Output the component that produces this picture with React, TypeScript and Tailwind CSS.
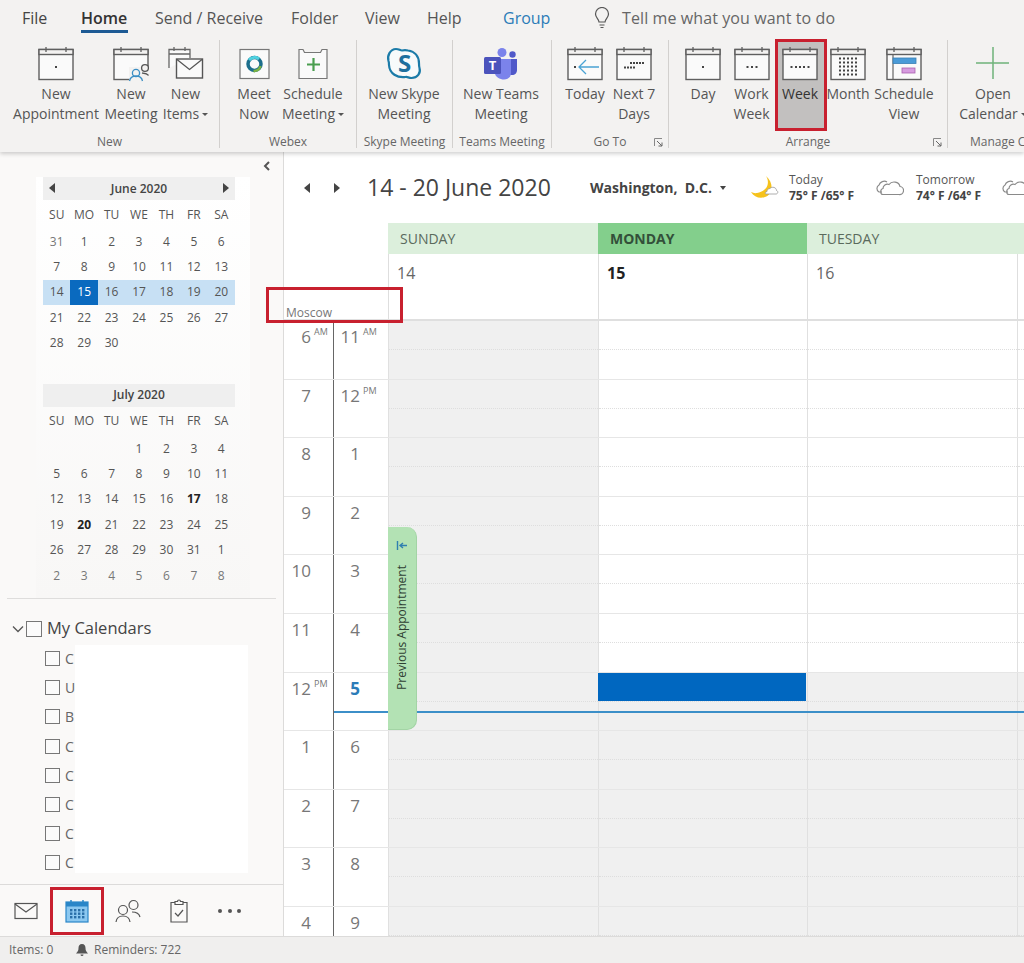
import React from "react";

const Cal = ({ children }: { children?: React.ReactNode }) => (
  <svg width="36" height="36" viewBox="0 0 36 36" fill="none">
    <rect x="1" y="3.5" width="34" height="30" fill="#fafafa" stroke="#5f5f5f" strokeWidth="1.4" />
    <rect x="1" y="3.5" width="34" height="5" fill="#f3f2f1" stroke="#5f5f5f" strokeWidth="1.4" />
    <path d="M8 1v5M28 1v5" stroke="#5f5f5f" strokeWidth="1.3" />
    {children}
  </svg>
);
const Dots = ({ pts }: { pts: [number, number][] }) => (
  <>
    {pts.map(([x, y], i) => (
      <rect key={i} x={x} y={y} width="2" height="2" fill="#444" />
    ))}
  </>
);
const grid = (cols: number[], rows: number[]): [number, number][] =>
  rows.flatMap((y) => cols.map((x) => [x, y] as [number, number]));

const Icons: Record<string, React.ReactNode> = {
  appt: <Cal><Dots pts={[[17, 20]]} /></Cal>,
  meeting: (
    <Cal>
      <rect x="16" y="21" width="20" height="15" fill="#f3f2f1" />
      <circle cx="23" cy="27" r="3.6" stroke="#3b8ec4" strokeWidth="1.3" fill="#f3f2f1" />
      <path d="M16.5 35c.8-4 3-5 6.5-5s5.7 1 6.5 5" stroke="#3b8ec4" strokeWidth="1.3" />
      <circle cx="32" cy="22" r="3.4" stroke="#555" strokeWidth="1.3" fill="#f3f2f1" />
      <path d="M29 27c2 .2 5 .2 6.5 2.5" stroke="#555" strokeWidth="1.3" />
    </Cal>
  ),
  items: (
    <svg width="36" height="36" viewBox="0 0 36 36" fill="none">
      <path d="M1 22V3.5h21V12" stroke="#666" strokeWidth="1.3" fill="#fafafa" />
      <path d="M1 8h21M6 1v4M17 1v4" stroke="#666" strokeWidth="1.3" />
      <rect x="8.500" y="13" width="26" height="19" fill="#fafafa" stroke="#555" strokeWidth="1.4" />
      <path d="M9 13.500l12.500 10 12.500-10" stroke="#555" strokeWidth="1.3" />
    </svg>
  ),
  meet: (
    <svg width="36" height="36" viewBox="0 0 36 36" fill="none">
      <rect x="4" y="3.500" width="29" height="29" fill="#fafafa" stroke="#777" strokeWidth="1.2" />
      <circle cx="18.500" cy="18" r="6.500" stroke="#1c6e8c" strokeWidth="3.500" />
      <path d="M13 14a7 7 0 0 1 10-1" stroke="#4fd1e0" strokeWidth="3" />
      <path d="M24.500 20a7 7 0 0 1-7 5" stroke="#7cb342" strokeWidth="2.500" />
    </svg>
  ),
  sched: (
    <svg width="36" height="36" viewBox="0 0 36 36" fill="none">
      <path d="M4 3.500h4l1.500 3h16l1.500-3h5v29H4z" fill="#fafafa" stroke="#777" strokeWidth="1.2" />
      <path d="M18.500 12v13M12 18.500h13" stroke="#4a9e4f" strokeWidth="2.200" />
    </svg>
  ),
  skype: (
    <svg width="36" height="36" viewBox="0 0 36 36" fill="none">
      <path d="M10 3c3 0 4 1.500 6 1.500C18 4 20 4 22 4.500c7 1 11 6 11 13 0 2 0 3 .5 4.500 1.500 5-2 10-8 10-3 0-4-1.500-6-1-8 1-16-3-16.500-12 0-2 0-3-.5-4C1 10 4 3 10 3z" stroke="#1b7ba8" strokeWidth="2.200" fill="#f7fafb" />
      <text x="18.500" y="26" textAnchor="middle" fontSize="24" fontWeight="700" fill="#1d6f9e" fontFamily="'Open Sans',sans-serif">S</text>
    </svg>
  ),
  teams: (
    <svg width="36" height="36" viewBox="0 0 36 36" fill="none">
      <circle cx="19" cy="6.500" r="4.500" fill="#7b83eb" />
      <circle cx="29.500" cy="8.500" r="3.200" fill="#5059c9" />
      <path d="M24 13h10v11c0 3-2 5-5 5s-5-2-5-5z" fill="#5059c9" />
      <path d="M12 13h16v14c0 4-3 6.500-7 6.500s-9-2.500-9-6.500z" fill="#7b83eb" />
      <rect x="1" y="11" width="17" height="17" rx="1.500" fill="#4b53bc" />
      <text x="9.500" y="24" textAnchor="middle" fontSize="13" fontWeight="700" fill="#fff" fontFamily="'Open Sans',sans-serif">T</text>
    </svg>
  ),
  today: (
    <Cal>
      <Dots pts={[[7, 20]]} />
      <path d="M32 21H12M19 14l-7 7 7 7" stroke="#4aa3d4" strokeWidth="1.3" />
    </Cal>
  ),
  next7: <Cal><Dots pts={[...grid([8, 11, 14, 17], [20.500]), ...grid([14, 17, 20, 23, 26], [16])]} /></Cal>,
  day: <Cal><Dots pts={[[17, 20]]} /></Cal>,
  work: <Cal><Dots pts={grid([12.500, 17, 21.500], [20])} /></Cal>,
  week: <Cal><Dots pts={grid([8.500, 13, 17, 21, 25.500], [20])} /></Cal>,
  month: <Cal><Dots pts={grid([9, 13, 17, 21, 25], [11.500, 15.500, 19.500, 23.500, 27.500])} /></Cal>,
  schedv: (
    <Cal>
      <path d="M7 9v24" stroke="#666" strokeWidth="1.2" />
      <rect x="7" y="12" width="23" height="5.500" fill="#4a9bd8" stroke="#3a7fb5" strokeWidth=".8" />
      <rect x="16" y="22" width="13" height="5" fill="#d79ce0" stroke="#a860b0" strokeWidth=".8" />
    </Cal>
  ),
  open: (
    <svg width="36" height="36" viewBox="0 0 36 36" fill="none">
      <path d="M18 1v32M1 17h33" stroke="#6fb37a" strokeWidth="1.500" />
    </svg>
  ),
};

type Btn = { k: string; w: string; a: string; b?: string; caret?: boolean; on?: boolean };
type Grp = { w: string; pl: string; label: string; launcher?: boolean; lc?: string; btns: Btn[] };

const groups: Grp[] = [
  { w: "w-[220px]", pl: "pl-[12px]", label: "New", btns: [
    { k: "appt", w: "w-[88px]", a: "New", b: "Appointment" },
    { k: "meeting", w: "w-[62px]", a: "New", b: "Meeting" },
    { k: "items", w: "w-[47px]", a: "New", b: "Items", caret: true },
  ] },
  { w: "w-[137px]", pl: "pl-[14px]", label: "Webex", btns: [
    { k: "meet", w: "w-[40px]", a: "Meet", b: "Now" },
    { k: "sched", w: "w-[78px]", a: "Schedule", b: "Meeting", caret: true },
  ] },
  { w: "w-[96px]", pl: "pl-0", label: "Skype Meeting", btns: [{ k: "skype", w: "w-[94px]", a: "New Skype", b: "Meeting" }] },
  { w: "w-[99px]", pl: "pl-0", label: "Teams Meeting", btns: [{ k: "teams", w: "w-[96px]", a: "New Teams", b: "Meeting" }] },
  { w: "w-[117px]", pl: "pl-[10px]", label: "Go To", launcher: true, btns: [
    { k: "today", w: "w-[46px]", a: "Today" },
    { k: "next7", w: "w-[52px]", a: "Next 7", b: "Days" },
  ] },
  { w: "w-[279px]", pl: "pl-[10px]", label: "Arrange", launcher: true, btns: [
    { k: "day", w: "w-[48px]", a: "Day" },
    { k: "work", w: "w-[49px]", a: "Work", b: "Week" },
    { k: "week", w: "w-[48px]", a: "Week", on: true },
    { k: "month", w: "w-[48px]", a: "Month" },
    { k: "schedv", w: "w-[64px]", a: "Schedule", b: "View" },
  ] },
  { w: "w-[90px]", pl: "pl-0", label: "Manage Calendars", lc: "text-left pl-[22px]", btns: [{ k: "open", w: "w-[90px]", a: "Open", b: "Calendar", caret: true }] },
];

const Caret = () => <span className="inline-block ml-[3px] mb-[3px] border-x-[3px] border-x-transparent border-t-[3px] border-t-[#555]" />;

function Ribbon() {
  const tabs = [
    ["File", "ml-[22px] w-[59px]", "text-[#444]"],
    ["Home", "w-[74px]", "text-[#333] font-semibold"],
    ["Send / Receive", "w-[136px]", "text-[#555]"],
    ["Folder", "w-[74px]", "text-[#555]"],
    ["View", "w-[62px]", "text-[#555]"],
    ["Help", "w-[76px]", "text-[#555]"],
    ["Group", "w-[98px]", "text-[#2b7cb8]"],
  ];
  return (
    <div className="h-[152px] shrink-0 bg-[#f3f2f1] shadow-[0_2px_4px_rgba(0,0,0,0.18)] z-10 overflow-hidden">
      <div className="h-[40px] flex items-center pb-[4px]">
        {tabs.map(([t, c, col]) => (
          <div key={t} className={`${c} ${col} text-[16px] whitespace-nowrap relative`}>
            {t}
            {t === "Home" && <div className="absolute left-0 top-[24px] w-[47px] h-[3px] bg-[#1d5a94]" />}
          </div>
        ))}
        <svg width="16" height="22" viewBox="0 0 16 22" fill="none" className="-ml-[7px] mr-[12px]">
          <path d="M5 15c0-3-3.500-4-3.500-8a6.500 6.500 0 0 1 13 0c0 4-3.500 5-3.500 8zM5.500 18h5M6.500 20.500h3" stroke="#555" strokeWidth="1.200" />
        </svg>
        <div className="text-[16px] tracking-[0.1px] text-[#666] whitespace-nowrap">Tell me what you want to do</div>
      </div>
      <div className="flex h-[110px] w-[1100px]">
        {groups.map((g, i) => (
          <div key={g.label} className={`${g.w} shrink-0 h-[108px] flex flex-col relative ${i < groups.length - 1 ? "border-r border-[#d2d0ce]" : ""}`}>
            <div className={`flex ${g.pl} h-[92px] shrink-0`}>
              {g.btns.map((b) => (
                <div key={b.k} className={`${b.w} shrink-0 h-[88px] flex flex-col items-center pt-[6px] text-[14px] leading-[19.5px] whitespace-nowrap ${b.on ? "bg-[#c2c0bf] text-[#333]" : "text-[#555]"}`}>
                  <div className="h-[36px] mb-[2px]">{Icons[b.k]}</div>
                  <div>{b.a}</div>
                  {b.b && <div>{b.b}{b.caret && <Caret />}</div>}
                </div>
              ))}
            </div>
            <div className={`h-[16px] text-center text-[12px] leading-[20px] text-[#666] whitespace-nowrap ${g.lc ?? ""}`}>{g.label}</div>
            {g.launcher && (
              <svg width="9" height="9" viewBox="0 0 9 9" fill="none" className="absolute right-[5px] bottom-[1px]">
                <path d="M.5 8V.5H8" stroke="#888" />
                <path d="M3 3l5 5M8 4.500V8H4.500" stroke="#666" />
              </svg>
            )}
          </div>
        ))}
      </div>
    </div>
  );
}

const Tri = ({ dir, c = "#444" }: { dir: "l" | "r"; c?: string }) => (
  <span className={`inline-block border-y-[5px] border-y-transparent ${dir === "l" ? "border-r-[6px]" : "border-l-[6px]"}`} style={dir === "l" ? { borderRightColor: c } : { borderLeftColor: c }} />
);

function MiniCal({ title, nav, weeks, bold = [], sel }: { title: string; nav?: boolean; weeks: (string | number)[][]; bold?: number[]; sel?: number }) {
  return (
    <div className="text-[12px] text-[#555]">
      <div className="h-[23px] bg-[#efefef] flex items-center justify-between px-[6px] font-semibold text-[12px] text-[#444]">
        <span className="w-[8px]">{nav && <Tri dir="l" />}</span>
        <span>{title}</span>
        <span className="w-[8px] text-right">{nav && <Tri dir="r" />}</span>
      </div>
      <div className="grid grid-cols-7 h-[29px] items-center text-center text-[#555]">
        {["SU", "MO", "TU", "WE", "TH", "FR", "SA"].map((d) => <div key={d}>{d}</div>)}
      </div>
      {weeks.map((w, i) => (
        <div key={i} className={`grid grid-cols-7 h-[25.4px] items-center text-center ${w[0] === 14 && sel ? "bg-[#c7e0f4]" : ""}`}>
          {w.map((d, j) => {
            const isSel = sel === d && w[0] === 14;
            const isBold = typeof d === "number" && bold.includes(d) && i > 0 && i < 5;
            const isMuted = (i === 0 && typeof d === "number" && d > 20) || i === 5;
            return (
              <div key={j} className={`h-full flex items-center justify-center ${isSel ? "bg-[#0a6abf] text-white" : ""} ${isBold ? "font-bold text-[#222]" : ""} ${isMuted && !isBold ? "text-[#777]" : ""}`}>{d}</div>
            );
          })}
        </div>
      ))}
    </div>
  );
}

const june = [[31, 1, 2, 3, 4, 5, 6], [7, 8, 9, 10, 11, 12, 13], [14, 15, 16, 17, 18, 19, 20], [21, 22, 23, 24, 25, 26, 27], [28, 29, 30, "", "", "", ""]];
const july = [["", "", "", 1, 2, 3, 4], [5, 6, 7, 8, 9, 10, 11], [12, 13, 14, 15, 16, 17, 18], [19, 20, 21, 22, 23, 24, 25], [26, 27, 28, 29, 30, 31, 1], [2, 3, 4, 5, 6, 7, 8]];

const Box = ({ l }: { l?: boolean }) => <span className={`${l ? "w-[16px] h-[16px]" : "w-[15px] h-[15px]"} bg-[#fbfbfb] border border-[#777] shrink-0 inline-block`} />;

function Sidebar() {
  const cals = ["C", "U", "B", "C", "C", "C", "C", "C"];
  return (
    <div className="w-[284px] shrink-0 bg-[#faf9f8] border-r border-[#dcdbda] flex flex-col relative">
      <div className="h-[25px] flex justify-end items-center pr-[12px] pt-[3px]">
        <svg width="8" height="10" viewBox="0 0 8 10"><path d="M6 1L2 5l4 4" stroke="#555" strokeWidth="2" fill="none" /></svg>
      </div>
      <div className="ml-[36px] w-[214px] pl-[7px] pr-[15px] h-[421px] bg-linear-to-b from-white to-[#f8f7f6] flex flex-col">
        <MiniCal title="June 2020" nav weeks={june} sel={15} />
        <div className="h-[28px] shrink-0" />
        <MiniCal title="July 2020" weeks={july} bold={[17, 20]} />
      </div>
      <div className="mx-[7px] h-[1px] bg-[#dedddc]" />
      <div className="flex items-center h-[27px] mt-[16px] pl-[12px] text-[#444] text-[16.500px]">
        <svg width="12" height="8" viewBox="0 0 12 8" className="mr-[2px]"><path d="M1 1.500l5 5 5-5" stroke="#555" strokeWidth="1.300" fill="none" /></svg>
        <Box l />
        <span className="ml-[5px]">My Calendars</span>
      </div>
      <div className="mt-[2px] pl-[45px]">
        {cals.map((c, i) => (
          <div key={i} className="h-[29.2px] flex items-center gap-[5px] text-[14px] text-[#666]"><Box />{c}</div>
        ))}
      </div>
      <div className="absolute left-[75px] top-[493px] w-[173px] h-[228px] bg-white" />
      <div className="flex-1" />
      <div className="h-[52px] border-t border-[#dcdbda] flex items-center relative">
        <svg width="24" height="18" viewBox="0 0 24 18" fill="none" className="ml-[14px]"><rect x="1" y="1.500" width="22" height="15" stroke="#555" strokeWidth="1.200" /><path d="M1 2l11 8 11-8" stroke="#555" strokeWidth="1.200" /></svg>
        <svg width="24" height="24" viewBox="0 0 24 24" fill="none" className="ml-[27px]">
          <rect x="1" y="3" width="22" height="20" fill="#8cc8f0" stroke="#2a86c8" strokeWidth="1.200" />
          <rect x="1" y="3" width="22" height="4.500" fill="#2a86c8" />
          <path d="M6 1v4M18 1v4" stroke="#2a86c8" strokeWidth="1.500" />
          {grid([5, 9, 13, 17], [10, 13.500, 17]).map(([x, y], i) => <rect key={i} x={x} y={y} width="2.400" height="2.400" fill="#2a6fa8" />)}
        </svg>
        <svg width="26" height="24" viewBox="0 0 26 24" fill="none" className="ml-[26px]">
          <circle cx="8" cy="11" r="4.500" stroke="#555" strokeWidth="1.200" /><path d="M1 23c.5-4 3-6 7-6s6.500 2 7 6" stroke="#555" strokeWidth="1.200" />
          <circle cx="18.500" cy="6" r="4.500" stroke="#555" strokeWidth="1.200" /><path d="M17 13c4 0 7 1 8 5" stroke="#555" strokeWidth="1.200" />
        </svg>
        <svg width="18" height="24" viewBox="0 0 18 24" fill="none" className="ml-[29px]">
          <path d="M5 3.500H1v19.500h16V3.500h-4M5 2.500h2.500a1.500 1.500 0 0 1 3 0H13v3H5z" stroke="#555" strokeWidth="1.200" />
          <path d="M5 14l3 3 5-6" stroke="#555" strokeWidth="1.200" />
        </svg>
        <div className="ml-[30px] flex gap-[5.500px]">
          {[0, 1, 2].map((i) => <span key={i} className="w-[4px] h-[4px] rounded-full bg-[#555]" />)}
        </div>
      </div>
    </div>
  );
}

const Cloud = () => (
  <svg width="30" height="18" viewBox="0 0 30 18" fill="none" className="shrink-0">
    <path d="M8 13H5a4 4 0 0 1 0-7c1-3 5-5 8-3M9 15.500h16a4 4 0 0 0 1-8c-1-5-8-6-11-2-3-1-6 1-6 4-3 .5-3 6 0 6z" stroke="#8a8a8a" strokeWidth="1.200" fill="#fff" />
  </svg>
);

const hours: [string, string?, string?, string?, boolean?][] = [
  ["6", "AM", "11", "AM"], ["7", undefined, "12", "PM"], ["8", undefined, "1"], ["9", undefined, "2"], ["10", undefined, "3"], ["11", undefined, "4"],
  ["12", "PM", "5", undefined, true], ["1", undefined, "6"], ["2", undefined, "7"], ["3", undefined, "8"], ["4", undefined, "9"],
];
const days = [
  { name: "SUNDAY", d: "14", w: "w-[210px]" },
  { name: "MONDAY", d: "15", w: "w-[209px]", today: true },
  { name: "TUESDAY", d: "16", w: "w-[210px]" },
];

function Main() {
  return (
    <div className="flex-1 min-w-0 bg-white flex flex-col relative overflow-hidden">
      <div className="h-[71px] shrink-0 flex items-center whitespace-nowrap">
        <span className="ml-[20px] mr-[24px] flex items-center shrink-0"><Tri dir="l" /></span>
        <span className="flex items-center shrink-0"><Tri dir="r" /></span>
        <span className="ml-[27px] text-[23px] text-[#444] w-[223px] shrink-0">14 - 20 June 2020</span>
        <span className="text-[14px] font-bold text-[#444] w-[123px] shrink-0">Washington,&nbsp; D.C.</span>
        <span className="inline-block ml-[7px] shrink-0 border-x-[3.500px] border-x-transparent border-t-[4px] border-t-[#444]" />
        <svg width="30" height="26" viewBox="0 0 30 26" fill="none" className="ml-[23px] shrink-0">
          <path d="M17 1c4 6 2 15-9 17-2 .4-4 0-6-1 3 5 9 7 14 5 7-2 10-13 1-21z" fill="#f6c21c" />
          <path d="M17 19h10c2 0 2.500-3 .5-3.500 0-3-4.500-4.500-6.500-2-2 0-3 1.500-3 3-2 0-2 2.500-1 2.500z" fill="#fff" stroke="#999" strokeWidth=".8" />
        </svg>
        <div className="ml-[10px] w-[85px] shrink-0 text-[12px] leading-[16px] text-[#555]">
          <div>Today</div>
          <div className="font-bold text-[#444]">75° F /65° F</div>
        </div>
        <Cloud />
        <div className="ml-[12px] w-[84px] shrink-0 text-[12px] leading-[16px] text-[#555]">
          <div>Tomorrow</div>
          <div className="font-bold text-[#444]">74° F /64° F</div>
        </div>
        <Cloud />
      </div>

      <div className="flex shrink-0 h-[98px] border-b-2 border-[#dfdfdf] relative">
        <div className="w-[104px] shrink-0 relative">
          <span className="absolute left-[2px] -bottom-[3px] text-[12px] text-[#777]">Moscow</span>
        </div>
        {days.map((d) => (
          <div key={d.name} className={`${d.w} shrink-0 flex flex-col`}>
            <div className={`h-[31px] flex items-center pl-[12px] text-[14px] ${d.today ? "bg-[#83cf8c] font-bold text-[#33503a]" : "bg-[#dcefdc] text-[#5a6a5c]"}`}>{d.name}</div>
            <div className={`flex-1 border-l border-[#dedede] pl-[8px] pt-[7px] text-[16px] ${d.today ? "font-bold text-[#222]" : "text-[#666]"}`}>{d.d}</div>
          </div>
        ))}
        <div className="flex-1 flex flex-col">
          <div className="h-[31px] bg-[#dcefdc]" />
          <div className="flex-1 border-l border-[#dedede]" />
        </div>
      </div>

      <div className="flex-1 relative overflow-hidden">
        {hours.map(([a, as, b, bs, cur], i) => (
          <div key={i} className="flex h-[58.6px] border-b border-[#e6e6e6] box-border">
            <div className="w-[50px] shrink-0 border-r border-[#666] flex text-[17px] leading-[31px] text-[#777]">
              <span className="w-[27px] text-right">{a}</span>
              {as && <span className="text-[9px] leading-[22px] ml-[3px]">{as}</span>}
            </div>
            <div className={`w-[54px] shrink-0 flex text-[17px] leading-[31px] ${cur ? "text-[#2b7cb8] font-bold" : "text-[#777]"}`}>
              <span className="w-[26px] text-right">{b}</span>
              {bs && <span className="text-[9px] leading-[22px] ml-[3px]">{bs}</span>}
            </div>
            {[0, 1, 2, 3].map((c) => {
              const gray = c === 0 || i >= 6;
              const w = ["w-[210px]", "w-[209px]", "w-[210px]", "flex-1"][c];
              return (
                <div key={c} className={`${w} shrink-0 border-l border-[#e0e0e0] ${gray ? "bg-[#f0f0f0]" : "bg-white"}`}>
                  <div className="h-[29px] border-b border-dotted border-[#dedede]" />
                </div>
              );
            })}
          </div>
        ))}
        <div className="absolute left-[314px] top-[352px] w-[208px] h-[28px] bg-[#0067c0]" />
        <div className="absolute left-[50px] right-0 top-[390px] h-[2px] bg-[#3c8fc8]" />
        <div className="absolute left-[104px] top-[206px] w-[29px] h-[203px] bg-[#b3e2b4] rounded-r-[10px] border-r border-b border-[#a3d4a5] flex flex-col items-center pt-[14px]">
          <svg width="12" height="9" viewBox="0 0 12 9" fill="none"><path d="M1.500 0v9M11 4.500H4M7 2L4 4.500 7 7" stroke="#2f7fb0" strokeWidth="1.400" /></svg>
          <span className="mt-[15px] text-[12px] text-[#2f3f33] whitespace-nowrap [writing-mode:vertical-rl] rotate-180">Previous Appointment</span>
        </div>
      </div>
    </div>
  );
}

export default function App() {
  return (
    <div className="w-[1024px] h-[963px] relative overflow-hidden flex flex-col bg-white font-['Open_Sans',sans-serif]">
      <Ribbon />
      <div className="flex flex-1 min-h-0">
        <Sidebar />
        <Main />
      </div>
      <div className="h-[27px] shrink-0 bg-[#f0efee] border-t border-[#dcdbda] flex items-center text-[12px] text-[#666] pl-[9px]">
        <span className="w-[66px]">Items: 0</span>
        <svg width="14" height="14" viewBox="0 0 14 14" className="mr-[5px]"><path d="M7 1c-2.500 0-3.500 2-3.500 4S3 8.500 1 10.500h12C11 8.500 10.500 7 10.500 5S9.500 1 7 1zM5.500 11.500h3a1.500 1.500 0 0 1-3 0z" fill="#555" /></svg>
        <span>Reminders: 722</span>
      </div>
      <div className="absolute left-[775px] top-[39px] w-[52px] h-[92px] border-[3px] border-[#c8202f] z-20" />
      <div className="absolute left-[266px] top-[287px] w-[137px] h-[36px] border-[3px] border-[#c8202f] z-20" />
      <div className="absolute left-[50px] top-[887px] w-[54px] h-[48px] border-[3px] border-[#c8202f] z-20" />
    </div>
  );
}
